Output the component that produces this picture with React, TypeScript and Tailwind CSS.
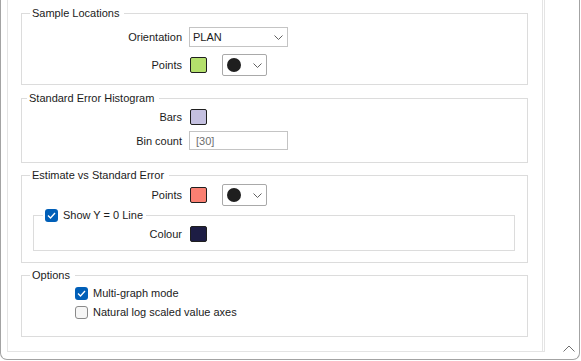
import React from "react";

type RowProps = { label: string; labelW?: string; className?: string; children: React.ReactNode };

function ChevronDown({ className = "" }: { className?: string }) {
  return (
    <svg className={className} width="9" height="5" viewBox="0 0 9 5" fill="none">
      <path d="M0.5 0.5 L4.5 4.5 L8.5 0.5" stroke="#606060" strokeWidth="1" />
    </svg>
  );
}

function Swatch({ color }: { color: string }) {
  return <div className={`ml-[1px] w-[17px] h-[16px] border border-[#1f1f1f] rounded-[2px] ${color}`} />;
}

function MarkerPick() {
  return (
    <div className="ml-[15px] w-[45px] h-[22px] border border-[#a9a9a9] rounded-[2px] flex items-center">
      <div className="ml-[4px] w-[14px] h-[14px] rounded-full bg-[#1f1f1f]" />
      <ChevronDown className="ml-[12px]" />
    </div>
  );
}

function Check({ on }: { on: boolean }) {
  if (on)
    return (
      <div className="w-[13px] h-[13px] rounded-[3px] bg-[#005fb8] flex items-center justify-center">
        <svg width="9" height="7" viewBox="0 0 9 7" fill="none">
          <path d="M1 3.5 L3.5 6 L8 1" stroke="white" strokeWidth="1.3" />
        </svg>
      </div>
    );
  return <div className="w-[13px] h-[13px] rounded-[3px] border border-[#8a8a8a] bg-[#f6f6f6]" />;
}

function Row({ label, labelW = "w-[160px]", className = "", children }: RowProps) {
  return (
    <div className={`flex items-center ${className}`}>
      <div className={`${labelW} text-right`}>{label}</div>
      <div className="ml-[7px] flex items-center">{children}</div>
    </div>
  );
}

function Group({ title, className, legendCls = "ml-[8px]", children }: { title: string; className: string; legendCls?: string; children: React.ReactNode }) {
  return (
    <fieldset className={`w-[507px] min-w-0 border border-[#dcdcdc] ${className}`}>
      <legend className={`${legendCls} pl-[2px] pr-[5px] leading-[16px]`}>{title}</legend>
      {children}
    </fieldset>
  );
}

export default function App() {
  return (
    <div className="relative w-[580px] h-[360px] bg-white border-x border-b border-[#a3a3a3] rounded-b-[7px] overflow-hidden text-[11px] leading-[16px] text-[#1b1b1b] font-['Segoe_UI','Liberation_Sans',sans-serif]">
      <div className="ml-[6px] w-[538px] h-[352px] border-l border-b border-r-[3px] border-double border-[#e4e4e4] pl-[13px] pt-[5px]">
        <Group title="Sample Locations" className="h-[80px]">
          <Row label="Orientation" className="mt-[6px] h-[20px]">
            <div className="w-[99px] h-[20px] border border-[#c4c4c4] flex items-center justify-between pl-[3px] pr-[4px]">
              <span>PLAN</span>
              <ChevronDown />
            </div>
          </Row>
          <Row label="Points" className="mt-[7px] h-[22px]">
            <Swatch color="bg-[#b4e06c]" />
            <MarkerPick />
          </Row>
        </Group>

        <Group title="Standard Error Histogram" className="mt-[5px] h-[73px]" legendCls="ml-[5px]">
          <Row label="Bars" className="mt-[3px] h-[16px]">
            <Swatch color="bg-[#c4c0e0]" />
          </Row>
          <Row label="Bin count" className="mt-[6px] h-[19px]">
            <div className="w-[99px] h-[19px] border border-[#c4c4c4] flex items-center pl-[6px] text-[#6d6d6d]">[30]</div>
          </Row>
        </Group>

        <Group title="Estimate vs Standard Error" className="mt-[4px] h-[96px]">
          <Row label="Points" className="mt-[1px] h-[22px]">
            <Swatch color="bg-[#fa8072]" />
            <MarkerPick />
          </Row>
          <fieldset className="ml-[11px] mt-[1px] w-[482px] h-[44px] min-w-0 border border-[#dcdcdc]">
            <legend className="ml-[9px] pl-[2px] pr-[3px] leading-[16px]">
              <span className="flex items-center">
                <Check on />
                <span className="ml-[5px]">Show Y = 0 Line</span>
              </span>
            </legend>
            <Row label="Colour" labelW="w-[148px]" className="mt-[3px] h-[16px]">
              <Swatch color="bg-[#1d1d44]" />
            </Row>
          </fieldset>
        </Group>

        <Group title="Options" className="mt-[4px] h-[70px]">
          <div className="mt-[2px] h-[16px] flex items-center pl-[53px]">
            <Check on />
            <span className="ml-[5px]">Multi-graph mode</span>
          </div>
          <div className="mt-[3px] h-[16px] flex items-center pl-[53px]">
            <Check on={false} />
            <span className="ml-[5px]">Natural log scaled value axes</span>
          </div>
        </Group>
      </div>
      <svg className="absolute right-[4px] bottom-[7px]" width="12" height="7" viewBox="0 0 12 7" fill="none">
        <path d="M0.5 6.5 L6 1 L11.5 6.5" stroke="#707070" strokeWidth="1" />
      </svg>
    </div>
  );
}
